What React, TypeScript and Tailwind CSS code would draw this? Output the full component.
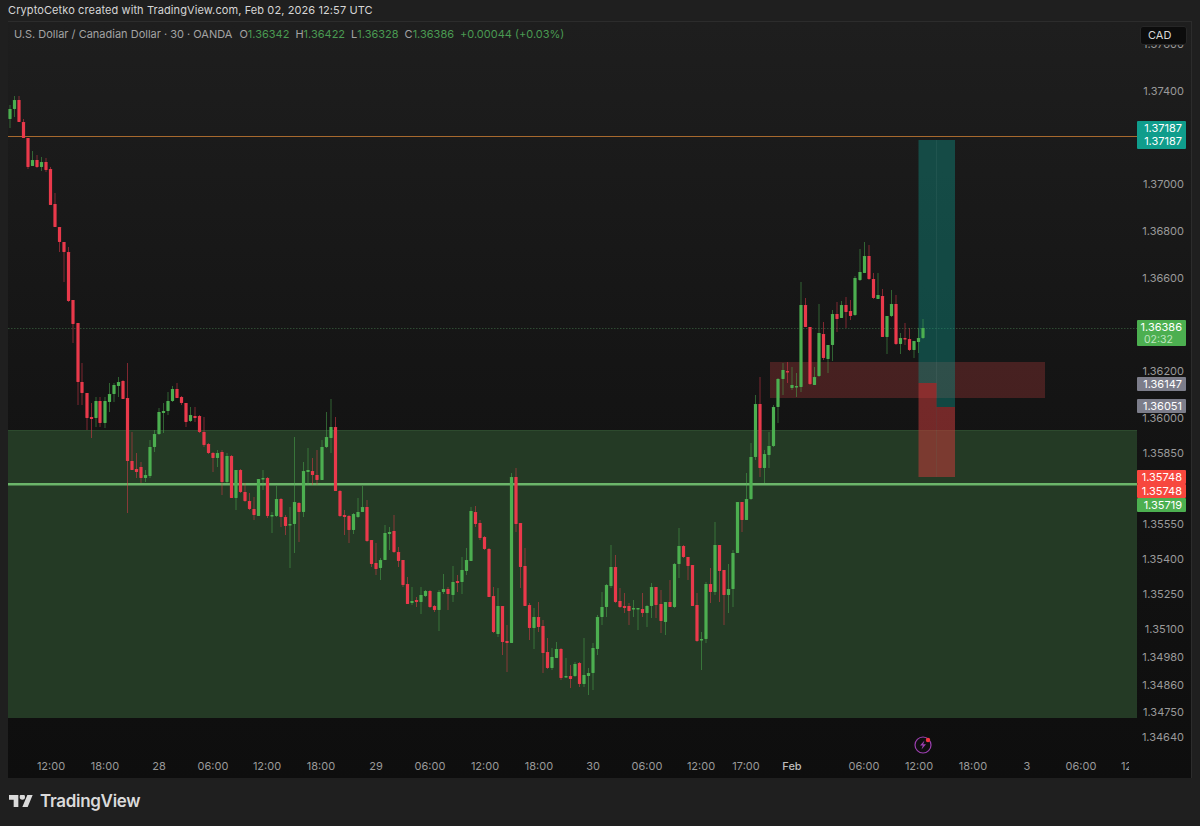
const raw = `10 g 109 119 105 128
14.5 g 100 109 96 117
19 r 100 122 96 122
23.5 r 122 138 119 138
28 r 138 167 138 169
32.5 g 160 166 151 166
37 r 160 167 155 168
41.5 g 162 167 157 171
46 r 162 170 158 172
50.5 r 169 205 167 205
55 r 204 227 193 227
59.5 r 227 242 227 252
64 r 242 252 242 282
68.5 r 252 301 247 302
73 r 300 324 300 343
78 r 323 382 323 405
82 r 382 393 363 405
87 r 393 418 393 430
91.5 r 417 419 403 438
96 g 401 418 397 427
100 r 401 423 397 427
105 g 401 423 397 428
109.5 g 394 402 383 412
114 g 385 394 383 402
118.5 g 382 386 377 397
123 r 381 399 380 399
127.5 r 398 461 363 513
132 r 461 470 432 470
136.5 r 469 472 453 478
141 r 467 478 462 483
145.5 g 475 478 470 482
150 g 447 476 440 478
154.5 g 434 447 430 452
159 g 412 434 408 435
163.5 g 411 413 403 433
168 g 401 411 392 415
172.5 g 389 401 386 402
177 r 389 398 383 398
181.5 r 397 403 396 405
186 r 403 422 403 427
190.5 g 415 421 407 422
195 r 416 418 407 422
199.5 r 416 432 415 433
204 r 432 445 417 447
208.5 r 444 453 443 454
213 r 453 458 452 472
217.5 g 453 458 450 467
222 r 452 482 450 495
227 g 456 482 453 483
231.5 r 456 498 455 498
236 g 470 498 470 510
240.5 r 470 492 469 493
245 r 492 501 483 502
249.5 r 501 509 493 510
254 r 509 515 497 520
258.5 g 479 516 479 516
263 g 478 479 470 490
267.5 r 478 516 477 518
272 g 515 516 512 533
276.5 g 499 516 486 517
281 r 499 517 498 527
285.5 r 517 526 515 535
290 g 524 525 507 568
294.5 g 502 524 437 553
299 r 503 512 502 542
303.5 g 471 512 462 517
308 g 470 472 448 485
312.5 r 471 475 458 485
317 r 475 480 450 485
322 g 447 480 440 480
326.5 g 437 447 412 448
331 g 427 438 399 453
335.5 r 427 491 417 491
340 r 491 516 490 517
344.5 r 515 517 510 535
349 r 516 530 515 543
353.5 g 514 530 513 534
358 g 512 517 498 518
362.5 g 507 512 486 512
367 r 507 541 500 542
371.5 r 540 564 540 567
376 r 563 569 543 575
380.5 g 560 568 558 580
385 g 533 560 525 560
389.5 g 532 534 527 550
394 r 531 552 515 553
398.5 r 552 561 547 567
403 r 560 585 560 587
407.5 r 584 604 577 604
412 g 601 603 587 605
416.5 r 600 602 597 607
421 g 595 602 587 614
425.5 g 591 596 590 597
430 r 591 607 590 608
434.5 r 606 610 605 612
439 g 592 610 590 631
443.5 g 589 592 574 594
448 r 589 594 587 610
453 g 582 595 566 602
457.5 r 581 583 575 592
462 g 570 582 557 594
466.5 g 560 571 548 575
471 g 511 561 507 561
475.5 r 512 524 506 527
480 r 523 538 520 540
484.5 r 537 549 536 550
489 r 549 597 548 597
493.5 r 596 632 587 633
498 g 606 634 588 637
502.5 r 606 642 606 655
507 r 641 643 625 672
511.5 g 477 643 473 643
516 r 477 524 468 532
520.5 r 523 567 523 588
525 r 566 606 548 606
529.5 r 605 628 603 640
534 g 617 628 608 649
538.5 r 617 627 602 632
543 r 626 653 620 673
547.5 r 652 668 638 669
552 g 657 668 648 670
556.5 g 649 658 642 658
561 r 649 678 648 680
566 g 676 677 658 678
570.5 r 676 679 665 688
575 g 664 676 662 677
579.5 r 663 684 662 687
584 g 675 684 638 687
588.5 g 673 676 668 695
593 g 648 673 643 690
597.5 g 617 649 615 655
602 g 607 617 592 625
606.5 g 585 607 584 617
611 g 567 586 545 588
615.5 r 567 602 555 603
620 r 601 607 588 608
624.5 r 606 608 593 613
629 r 606 611 603 625
633.5 g 608 609 600 617
638 g 608 609 608 630
642.5 r 609 613 593 617
647 g 606 613 605 627
651.5 g 587 606 583 618
656 r 587 605 587 618
661 r 604 621 590 633
665.5 g 602 622 602 635
670 r 602 607 580 607
674.5 g 564 607 563 608
679 g 546 564 528 578
683.5 r 546 557 545 558
688 r 557 566 557 580
692.5 r 565 606 565 606
697 r 605 641 593 642
701.5 g 639 640 632 670
706 g 584 639 582 643
710.5 r 584 592 568 603
715 g 545 592 522 595
719.5 r 545 571 545 602
724 r 570 595 570 625
728.5 g 589 595 564 613
733 g 553 589 550 607
737.5 g 502 553 502 553
742 r 502 520 502 532
746.5 g 499 520 473 520
751 g 457 499 443 500
755.5 g 404 457 395 460
760 r 404 468 377 477
764.5 g 454 468 450 483
769 g 446 455 432 468
773.5 g 407 446 405 447
778 g 379 407 378 423
783 g 370 379 363 395
787.5 r 371 372 362 383
792 g 385 388 367 390
796.5 g 386 387 373 397
801 g 305 387 282 392
805.5 r 305 327 298 327
810 r 327 384 327 385
814.5 g 377 385 367 385
819 g 333 376 304 377
823.5 r 334 358 322 360
828 g 345 359 345 373
832.5 g 314 345 310 361
837 r 314 319 302 332
841.5 g 305 318 301 318
846 r 305 312 297 328
850.5 r 311 316 300 320
855 g 278 315 276 316
860 g 272 280 249 281
864.5 g 256 273 242 273
869 r 256 279 245 280
873.5 r 279 298 273 299
878 g 295 299 273 299
882.5 r 296 337 289 337
887 g 316 337 316 354
891.5 g 304 316 290 317
896 r 304 344 295 345
900.5 g 338 344 333 354
905 r 338 339 323 345
909.5 r 339 350 328 351
914 g 341 350 341 358
918.5 g 338 342 328 353
923 g 328 338 319 339`;

const candles = raw.split("\n").map((l) => {
  const [x, c, t, b, wt, wb] = l.split(" ");
  return { x: +x, green: c === "g", t: +t, b: +b, wt: +wt, wb: +wb };
});

const priceLabels: [string, number][] = [
  ["1.37600", 44],
  ["1.37400", 91],
  ["1.37000", 184],
  ["1.36800", 231],
  ["1.36600", 278],
  ["1.36200", 371],
  ["1.36000", 418],
  ["1.35850", 453],
  ["1.35550", 524],
  ["1.35400", 559],
  ["1.35250", 594],
  ["1.35100", 629],
  ["1.34980", 657],
  ["1.34860", 685],
  ["1.34750", 712],
  ["1.34640", 737],
];

const timeLabels: [string, number, boolean?][] = [
  ["12:00", 51],
  ["18:00", 105],
  ["28", 159],
  ["06:00", 213],
  ["12:00", 267],
  ["18:00", 321],
  ["29", 376],
  ["06:00", 430],
  ["12:00", 485],
  ["18:00", 539],
  ["30", 593],
  ["06:00", 647],
  ["12:00", 701],
  ["17:00", 746],
  ["Feb", 792, true],
  ["06:00", 864],
  ["12:00", 919],
  ["18:00", 973],
  ["3", 1027],
  ["06:00", 1081],
  ["12:00", 1135],
];

const font = "font-['Inter','Liberation_Sans',sans-serif]";

function Candles() {
  return (
    <>
      {candles.map((c, i) => {
        const col = c.green ? "#4caf50" : "#e9394b";
        return (
          <g key={i}>
            <rect x={c.x - 0.5} y={c.wt} width={1} height={Math.max(c.wb - c.wt, 1)} fill={col} opacity={0.5} />
            <rect x={c.x - 1.6} y={c.t} width={3.2} height={Math.max(c.b - c.t, 1.5)} fill={col} rx={0.4} />
          </g>
        );
      })}
    </>
  );
}

function ChartDrawing() {
  return (
    <svg viewBox="8 22 1129 735" className="absolute inset-0 w-[1129px] h-[735px]">
      <rect x={8} y={430} width={1129} height={288} fill="#243a25" />
      <rect x={8} y={430} width={1129} height={1} fill="#2d4a2e" />
      <rect x={8} y={136} width={1129} height={1} fill="#a7692e" />
      <line x1={8} x2={1137} y1={328.5} y2={328.5} stroke="#2f4a33" strokeWidth={1} strokeDasharray="1.5 1.5" />
      <rect x={770} y={362} width={275} height={36} fill="#b03a3c" fillOpacity={0.32} />
      <rect x={918.5} y={140} width={36.5} height={243} fill="#0f8f84" fillOpacity={0.42} />
      <rect x={936.5} y={383} width={18.5} height={24} fill="#0f8f84" fillOpacity={0.42} />
      <rect x={918.5} y={383} width={18} height={94} fill="#c23a3a" fillOpacity={0.55} />
      <rect x={936.5} y={407} width={18.5} height={70} fill="#c23a3a" fillOpacity={0.55} />
      <rect x={936} y={140} width={1} height={337} fill="#ffffff" fillOpacity={0.05} />
      <rect x={8} y={483} width={1129} height={2.5} fill="#6bb56a" />
      <Candles />
    </svg>
  );
}

function Badge({ top, h, bg, lines, sub }: { top: number; h: number; bg: string; lines: string[]; sub?: string }) {
  return (
    <div
      className={`absolute left-[0px] w-[49px] flex flex-col items-end justify-center pr-[4px] rounded-[1px] text-[11px] leading-[13px] text-white`}
      style={{ top: top - 22, height: h, backgroundColor: bg }}
    >
      {lines.map((l, i) => (
        <span key={i}>{l}</span>
      ))}
      {sub && <span className="w-full pl-[7px] text-[#bfe5c0] text-[10.5px] leading-[12px]">{sub}</span>}
    </div>
  );
}

export default function App() {
  return (
    <div className={`w-[1200px] h-[826px] flex flex-col bg-[#1f1f1f] overflow-hidden ${font}`}>
      <div className="h-[21px] pl-[8px] flex items-center text-[11px] text-[#d6d6d6] tracking-[0.1px]">
        CryptoCetko created with TradingView.com, Feb 02, 2026 12:57 UTC
      </div>
      <div className="mx-[8px] h-[757px] flex flex-col border-t border-r border-[#2c2c2c] bg-gradient-to-b from-[#1e1e1e] via-[#141414] via-50% to-[#0e0e0e]">
        <div className="flex h-[735px]">
          <div className="relative w-[1129px] h-[735px] overflow-hidden">
            <ChartDrawing />
            <div className="absolute left-[6px] top-[5px] flex items-center h-[14px] text-[11px] text-[#a3a3a3] whitespace-nowrap">
              <span>U.S. Dollar / Canadian Dollar · 30 · OANDA</span>
              <span className="ml-[7px]">O</span>
              <span className="text-[#4a9a52]">1.36342</span>
              <span className="ml-[6px]">H</span>
              <span className="text-[#4a9a52]">1.36422</span>
              <span className="ml-[6px]">L</span>
              <span className="text-[#4a9a52]">1.36328</span>
              <span className="ml-[6px]">C</span>
              <span className="text-[#4a9a52]">1.36386</span>
              <span className="ml-[6px] text-[#4a9a52]">+0.00044 (+0.03%)</span>
            </div>
            <svg viewBox="0 0 20 20" className="absolute left-[905px] top-[713px] w-[20px] h-[20px]">
              <circle cx="10" cy="10" r="8" fill="none" stroke="#9c3fb0" strokeWidth="1.2" />
              <path d="M11.5 5.5 L7 10.5 H9.8 L8.5 14.5 L13 9.2 H10.2 Z" fill="#9c3fb0" />
              <circle cx="15" cy="5" r="2.2" fill="#f23645" />
            </svg>
          </div>
          <div className="relative flex-1 text-[11px] text-[#9a9a9a]">
            {priceLabels.map(([t, y]) => (
              <span key={t} className="absolute right-[7px] leading-[13px]" style={{ top: y - 28.5 }}>
                {t}
              </span>
            ))}
            <Badge top={121} h={28} bg="#0f9d8c" lines={["1.37187", "1.37187"]} />
            <Badge top={320} h={26} bg="#4caf50" lines={["1.36386"]} sub="02:32" />
            <Badge top={377} h={14} bg="#7c7d8a" lines={["1.36147"]} />
            <Badge top={399} h={14} bg="#7c7d8a" lines={["1.36051"]} />
            <Badge top={470} h={14} bg="#f7473e" lines={["1.35748"]} />
            <Badge top={484} h={14} bg="#f7473e" lines={["1.35748"]} />
            <Badge top={498} h={14} bg="#4caf50" lines={["1.35719"]} />
            <div className="absolute left-[3px] top-[4px] w-[47px] h-[19px] pl-[7px] flex items-center rounded-[3px] bg-[#0c0c0c] border border-[#262626] text-[11px] text-[#d8d8d8]">
              CAD
            </div>
          </div>
        </div>
        <div className="relative h-[21px] w-[1121px] overflow-hidden text-[11px] text-[#9a9a9a]">
          {timeLabels.map(([t, x, bold], i) => (
            <span
              key={i}
              className={`absolute top-[3px] leading-[13px] -translate-x-1/2 ${bold ? "font-medium text-[#bdbdbd]" : ""}`}
              style={{ left: x - 8 }}
            >
              {t}
            </span>
          ))}
        </div>
      </div>
      <div className="flex-1 flex items-start pl-[9px] pt-[15px] gap-[7px]">
        <svg viewBox="0 4 36 18" className="w-[24px] h-[12px] mt-[2px]" fill="#dadada">
          <path d="M14 22H7V11H0V4h14v18zM28 22h-8l7.5-18h8L28 22z" />
          <circle cx="20" cy="7" r="4" />
        </svg>
        <span className="text-[17px] leading-[17px] font-semibold text-[#dadada] tracking-[-0.3px]">TradingView</span>
      </div>
    </div>
  );
}
